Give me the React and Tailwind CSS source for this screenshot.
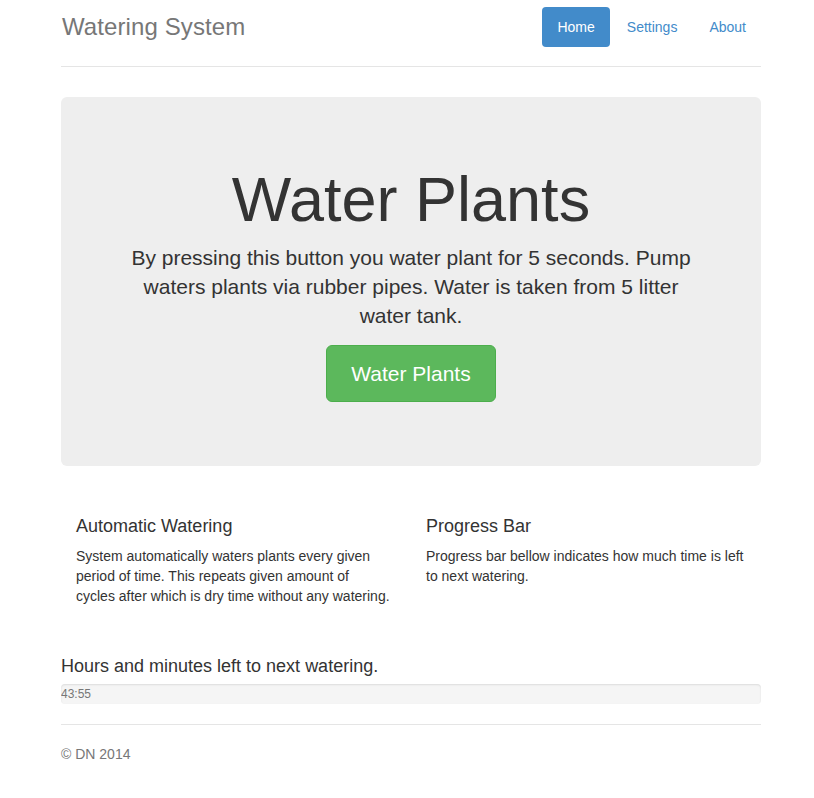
const navItems = ["Home", "Settings", "About"];

const App = () => {
  return (
    <div className="min-h-[798px] bg-white font-['Liberation_Sans',Arial,sans-serif] text-[14px] leading-[20px] text-[#333]">
      <div className="ml-[61px] w-[700px]">
        {/* Header */}
        <div className="flex items-start justify-between border-b border-[#e5e5e5] pt-[7px] pb-[19px]">
          <h3 className="pl-[1px] text-[24px] leading-[40px] tracking-[0.1px] text-[#777]">Watering System</h3>
          <ul className="flex gap-[2px]">
            {navItems.map((item, i) => (
              <li key={item}>
                <a
                  href="#"
                  className={
                    i === 0
                      ? "block rounded-[4px] bg-[#428bca] px-[15px] py-[10px] text-white"
                      : "block rounded-[4px] px-[15px] py-[10px] text-[#428bca]"
                  }
                >
                  {item}
                </a>
              </li>
            ))}
          </ul>
        </div>

        {/* Jumbotron */}
        <div className="mt-[30px] rounded-[6px] bg-[#eeeeee] px-[60px] pt-[68px] pb-[48px] text-center">
          <h1 className="text-[63px] leading-[69px]">Water Plants</h1>
          <p className="mt-[9px] text-[21px] leading-[29px]">
            By pressing this button you water plant for 5 seconds. Pump waters plants via rubber pipes. Water
            is taken from 5 litter water tank.
          </p>
          <p className="mt-[15px] mb-[16px]">
            <button className="rounded-[6px] border border-[#4cae4c] bg-[#5cb85c] px-[24px] py-[14px] text-[21px] leading-[27px] text-white">
              Water Plants
            </button>
          </p>
        </div>

        {/* Marketing */}
        <div className="mt-[50px] grid grid-cols-[315px_320px] gap-x-[35px] pl-[15px]">
          <div>
            <h4 className="text-[18px] leading-[20px]">Automatic Watering</h4>
            <p className="mt-[10px] mb-[10px]">
              System automatically waters plants every given period of time. This repeats given amount of
              cycles after which is dry time without any watering.
            </p>
          </div>
          <div>
            <h4 className="text-[18px] leading-[20px]">Progress Bar</h4>
            <p className="mt-[10px] mb-[10px]">Progress bar bellow indicates how much time is left to next watering.</p>
          </div>
        </div>

        {/* Countdown */}
        <h4 className="mt-[40px] text-[18px] leading-[20px]">Hours and minutes left to next watering.</h4>
        <div className="mt-[8px] h-[20px] overflow-hidden rounded-[4px] bg-[#f5f5f5] shadow-[inset_0_1px_2px_rgba(0,0,0,0.1)]">
          <span className="block text-[12px] leading-[20px] text-[#777]">43:55</span>
        </div>

        {/* Footer */}
        <div className="mt-[20px] border-t border-[#e5e5e5] pt-[19px]">
          <p className="text-[#777]">© DN 2014</p>
        </div>
      </div>
    </div>
  );
};

export default App;
